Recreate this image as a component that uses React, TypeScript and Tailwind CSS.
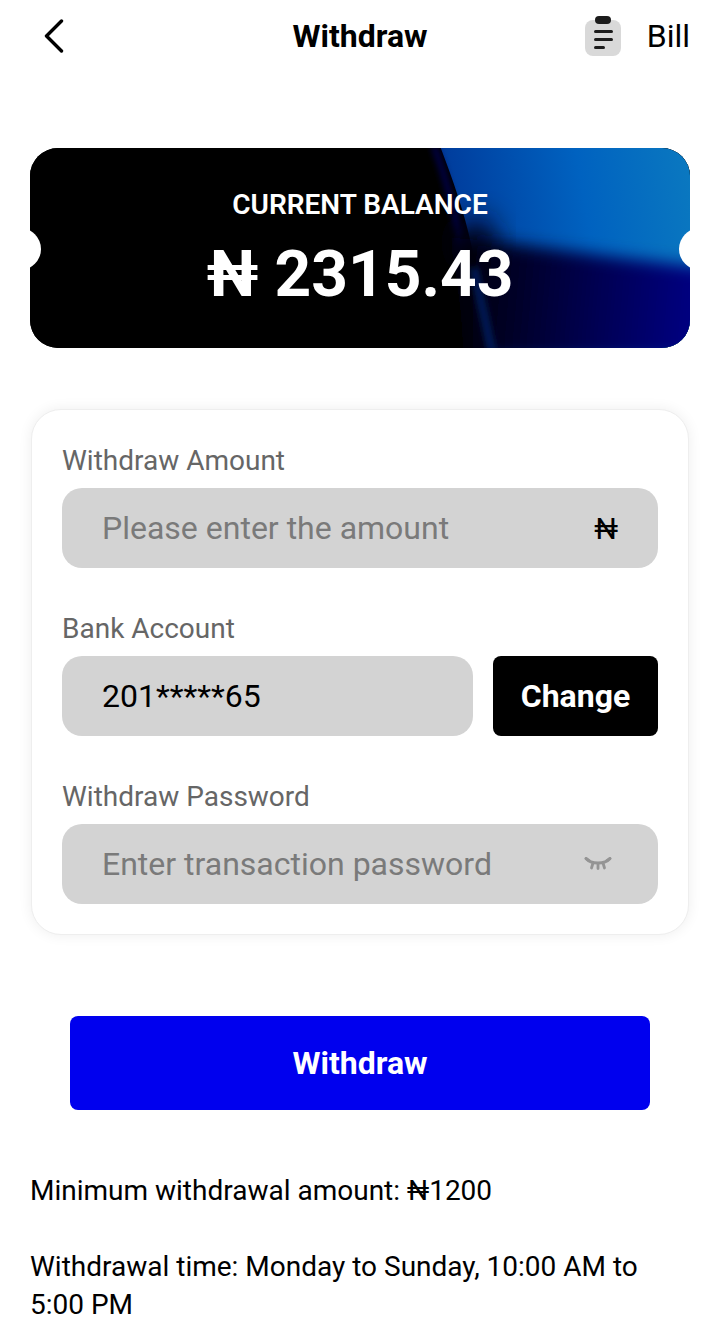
function Naira({ className }: { className?: string }) {
  return <span className={className}>₦</span>;
}

function BackIcon() {
  return (
    <svg width="20" height="34" viewBox="0 0 20 34" fill="none" stroke="#000" strokeWidth="3.4" strokeLinecap="round" strokeLinejoin="round">
      <path d="M17.5 2L2.5 17l15 15" />
    </svg>
  );
}

function BillIcon() {
  return (
    <svg width="36" height="40" viewBox="0 0 36 40" fill="none">
      <rect x="0" y="4" width="36" height="36" rx="8" fill="#d9d9d9" />
      <rect x="10" y="0" width="16" height="8" rx="4" fill="#1c1c1c" />
      <rect x="9" y="14" width="19" height="3" rx="1.5" fill="#1c1c1c" />
      <rect x="9" y="22" width="19" height="3" rx="1.5" fill="#1c1c1c" />
      <rect x="9" y="30" width="11" height="3" rx="1.5" fill="#1c1c1c" />
    </svg>
  );
}

function ClosedEye() {
  return (
    <svg width="28" height="16" viewBox="0 0 28 16" fill="none" stroke="#949494" strokeWidth="2.8" strokeLinecap="round">
      <path d="M2 2.500c3 3.500 7 4.500 12 4.500s9-1 12-4.500" />
      <path d="M2 2.500l3 2M26 2.500l-3 2M9 7l-1.500 5M14 7.500v5M19 7l1.500 5" />
    </svg>
  );
}

function BalanceArt() {
  return (
    <svg className="absolute inset-0 h-full w-full" viewBox="0 0 660 200" preserveAspectRatio="none">
      <defs>
        <linearGradient id="top" gradientUnits="userSpaceOnUse" x1="420" y1="60" x2="660" y2="20">
          <stop offset="0" stopColor="#003c9c" />
          <stop offset="0.55" stopColor="#0062c0" />
          <stop offset="1" stopColor="#0a78c0" />
        </linearGradient>
        <linearGradient id="low" gradientUnits="userSpaceOnUse" x1="440" y1="150" x2="660" y2="170">
          <stop offset="0" stopColor="#000010" />
          <stop offset="0.5" stopColor="#00004a" />
          <stop offset="1" stopColor="#000080" />
        </linearGradient>
        <filter id="soft" x="-20%" y="-20%" width="140%" height="140%">
          <feGaussianBlur stdDeviation="8" />
        </filter>
        <filter id="softer" x="-50%" y="-50%" width="200%" height="200%">
          <feGaussianBlur stdDeviation="14" />
        </filter>
        <filter id="thin" x="-50%" y="-10%" width="200%" height="120%">
          <feGaussianBlur stdDeviation="3" />
        </filter>
      </defs>
      <rect width="660" height="200" fill="#000" />
      <path d="M410 -2C422 30 434 62 442 100L462 202H670V-2Z" fill="url(#top)" />
      <path d="M404 -2C416 30 424 60 432 100L440 110" stroke="#00004c" strokeWidth="6" fill="none" filter="url(#thin)" />
      <ellipse cx="446" cy="95" rx="20" ry="26" fill="#000020" filter="url(#softer)" />
      <path d="M420 90C470 92 530 104 680 120V210H440Z" fill="url(#low)" filter="url(#soft)" />
      <path d="M444 120C450 150 456 175 462 204" stroke="#001f5a" strokeWidth="8" fill="none" filter="url(#thin)" />
    </svg>
  );
}

function Field({ label, children }: { label: string; children: React.ReactNode }) {
  return (
    <div>
      <div className="text-[28px] leading-[40px] text-[#666666]">{label}</div>
      <div className="mt-[7px]">{children}</div>
    </div>
  );
}

export default function App() {
  return (
    <div className="h-[1340px] w-[720px] overflow-hidden bg-white font-['Roboto',sans-serif] text-black antialiased">
      <header className="relative flex h-[72px] items-center justify-between pl-[44px] pr-[30px]">
        <BackIcon />
        <h1 className="absolute left-0 right-0 text-center text-[32px] font-bold">Withdraw</h1>
        <div className="flex items-center gap-[26px]">
          <BillIcon />
          <span className="text-[32px]">Bill</span>
        </div>
      </header>

      <section className="relative mx-[30px] mt-[76px] flex h-[200px] flex-col items-center overflow-hidden rounded-[28px] bg-black text-white">
        <BalanceArt />
        <div className="relative mt-[39px] text-[28px] leading-[36px] font-semibold">CURRENT BALANCE</div>
        <div className="relative mt-[14px] text-[64px] leading-[76px] font-bold">₦ 2315.43</div>
        <span className="absolute top-[80px] -left-[31px] size-[42px] rounded-full bg-white" />
        <span className="absolute top-[80px] -right-[31px] size-[42px] rounded-full bg-white" />
      </section>

      <section className="mx-[31px] mt-[61px] flex h-[526px] flex-col gap-[41px] rounded-[30px] border border-[#eeeeee] bg-white px-[30px] pt-[31px] shadow-[0_0_14px_rgba(0,0,0,0.07)]">
        <Field label="Withdraw Amount">
          <div className="flex h-[80px] items-center justify-between rounded-[20px] bg-[#d3d3d3] px-[40px] text-[32px] text-[#7a7a7a]">
            <span>Please enter the amount</span>
            <Naira className="text-[30px] text-black" />
          </div>
        </Field>
        <Field label="Bank Account">
          <div className="flex gap-[20px]">
            <div className="flex h-[80px] flex-1 items-center rounded-[20px] bg-[#d3d3d3] pl-[40px] text-[32px]">201*****65</div>
            <button className="h-[80px] w-[165px] rounded-[8px] bg-black text-[32px] font-bold text-white">Change</button>
          </div>
        </Field>
        <Field label="Withdraw Password">
          <div className="flex h-[80px] items-center justify-between rounded-[20px] bg-[#d3d3d3] pr-[46px] pl-[40px] text-[32px] text-[#7a7a7a]">
            <span>Enter transaction password</span>
            <ClosedEye />
          </div>
        </Field>
      </section>

      <button className="mx-[70px] mt-[81px] block h-[94px] w-[580px] rounded-[8px] bg-[#0000ee] text-[32px] font-bold text-white">Withdraw</button>

      <div className="mx-[30px] mt-[62px] text-[28px] leading-[38px]">
        <p>Minimum withdrawal amount: ₦1200</p>
        <p className="mt-[38px]">Withdrawal time: Monday to Sunday, 10:00 AM to 5:00 PM</p>
      </div>
    </div>
  );
}
